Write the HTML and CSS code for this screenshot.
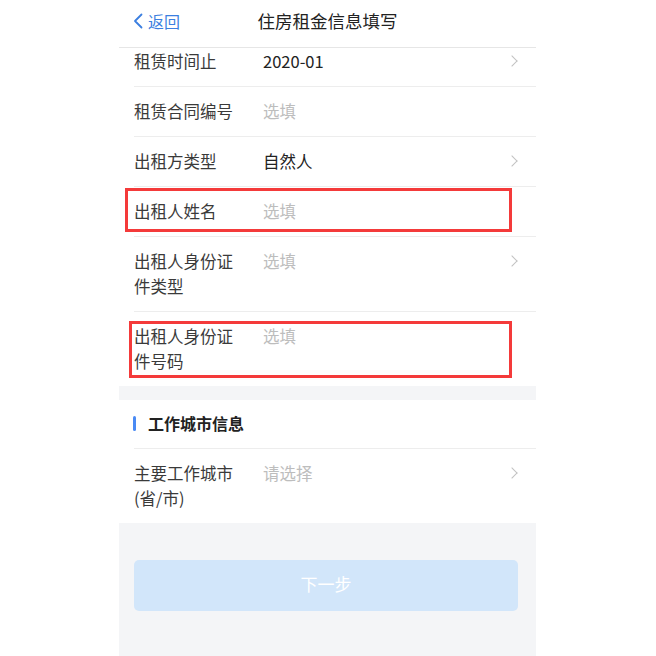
FILE: index.html
```html
<!DOCTYPE html>
<html lang="zh-CN">
<head>
<meta charset="utf-8">
<link rel="stylesheet" href="styles.css">
</head>
<body>
<div class="phone">
  <header class="nav">
    <a class="back">
      <svg class="back-icon" width="10" height="16" viewBox="0 0 10 16"><path d="M8.5 1.5 L2 8 L8.5 14.5" fill="none" stroke="#3b7fe0" stroke-width="1.8" stroke-linecap="round" stroke-linejoin="round"/></svg>
      <span>返回</span>
    </a>
    <h1 class="title">住房租金信息填写</h1>
    <span class="nav-spacer"></span>
  </header>
  <div class="scroll">
    <div class="list list-first">
      <div class="row">
        <div class="label">租赁时间止</div>
        <div class="value">2020-01</div>
        <span class="chev"></span>
      </div>
      <div class="row">
        <div class="label">租赁合同编号</div>
        <div class="value placeholder">选填</div>
      </div>
      <div class="row">
        <div class="label">出租方类型</div>
        <div class="value">自然人</div>
        <span class="chev"></span>
      </div>
      <div class="row">
        <div class="label">出租人姓名</div>
        <div class="value placeholder">选填</div>
      </div>
      <div class="row">
        <div class="label">出租人身份证<br>件类型</div>
        <div class="value placeholder">选填</div>
        <span class="chev"></span>
      </div>
      <div class="row row-last">
        <div class="label">出租人身份证<br>件号码</div>
        <div class="value placeholder">选填</div>
      </div>
    </div>
    <div class="gap"></div>
    <div class="list">
      <div class="section-head"><span class="bar"></span>工作城市信息</div>
      <div class="row row-last">
        <div class="label">主要工作城市<br>(省/市)</div>
        <div class="value placeholder">请选择</div>
        <span class="chev"></span>
      </div>
    </div>
    <div class="footer">
      <button class="next">下一步</button>
    </div>
  </div>
</div>
<div class="mark mark-1"></div>
<div class="mark mark-2"></div>
</body>
</html>
```
FILE: styles.css
```css
* { box-sizing: border-box; }
html, body {
  margin: 0;
  padding: 0;
  background: #ffffff;
  font-family: "Noto Sans CJK SC", "Noto Sans", sans-serif;
}
body { position: relative; height: 656px; overflow: hidden; }
.phone {
  width: 417px;
  margin-left: 119px;
  height: 656px;
  display: flex;
  flex-direction: column;
  background: #f4f5f7;
}
.nav {
  height: 48px;
  flex: none;
  background: #fff;
  border-bottom: 1px solid #e6e6e6;
  display: grid;
  grid-template-columns: 1fr auto 1fr;
  align-items: center;
  padding-bottom: 5px;
  position: relative;
  z-index: 2;
}
.back {
  display: flex;
  align-items: center;
  gap: 5px;
  margin-left: 14px;
  color: #3b7fe0;
  font-size: 16px;
  line-height: 22px;
}
.back-icon { display: block; }
.title {
  margin: 0;
  font-size: 17.5px;
  font-weight: 400;
  color: #222;
  line-height: 24px;
}
.scroll {
  flex: 1;
  overflow: hidden;
}
.list { background: #fff; }
.list-first { margin-top: -11px; }
.row {
  display: flex;
  align-items: flex-start;
  margin-left: 15px;
  padding: 12px 18px 12px 0;
  border-bottom: 1px solid #ededed;
  font-size: 16.5px;
  line-height: 25px;
}
.row-last { border-bottom: none; }
.label {
  width: 129px;
  flex: none;
  color: #3a3a3a;
}
.value {
  flex: 1;
  color: #222;
}
.placeholder { color: #bdbdbd; }
.chev {
  width: 8px;
  height: 8px;
  margin-top: 8px;
  margin-right: 2px;
  border-top: 1.8px solid #c2c2c2;
  border-right: 1.8px solid #c2c2c2;
  transform: rotate(45deg);
}
.gap { height: 14px; }
.section-head {
  display: flex;
  align-items: center;
  height: 49px;
  margin-left: 15px;
  padding-bottom: 2px;
  border-bottom: 1px solid #ededed;
  font-size: 16px;
  font-weight: 700;
  color: #222;
}
.bar {
  width: 3px;
  height: 15px;
  border-radius: 2px;
  background: #4a8af4;
  margin-right: 12px;
  margin-left: -1px;
}
.footer {
  padding: 37px 18px 0 15px;
}
.next {
  display: block;
  width: 100%;
  height: 51px;
  border: none;
  border-radius: 5px;
  padding: 0 0 5px;
  background: #d2e6fa;
  color: #fff;
  font-family: "Noto Sans CJK SC", sans-serif;
  font-size: 17px;
}
.mark {
  position: absolute;
  border: 3px solid #f43a3a;
}
.mark-1 { left: 125px; top: 188px; width: 387px; height: 44px; }
.mark-2 { left: 129px; top: 321px; width: 383px; height: 57px; }
```
